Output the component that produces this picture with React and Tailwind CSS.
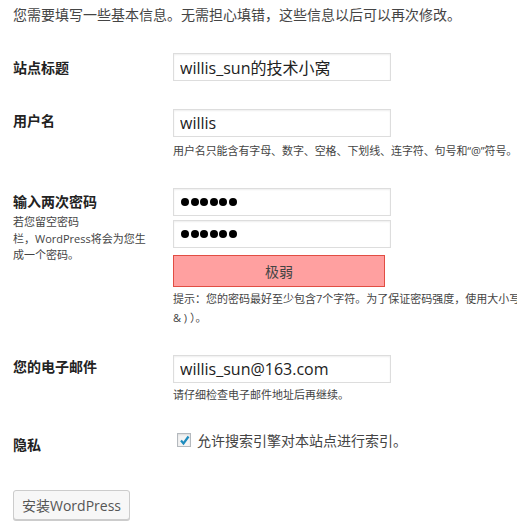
import React from 'react';

const FONT = "font-['Open_Sans','Noto_Sans_CJK_SC',sans-serif]";

function TextBox({ value }) {
  return (
    <input
      type="text"
      readOnly
      value={value}
      className="block w-[218px] h-[28px] border border-[#ddd] bg-white px-[6px] text-[16px] text-[#222] shadow-[inset_0_1px_2px_rgba(0,0,0,0.07)] outline-none"
    />
  );
}

function PasswordBox() {
  // 密码框：六个实心圆点
  return (
    <div className="flex items-center gap-[1.5px] w-[218px] h-[28px] border border-[#ddd] bg-white pl-[7px] shadow-[inset_0_1px_2px_rgba(0,0,0,0.07)]">
      {[0, 1, 2, 3, 4, 5].map((i) => (
        <span key={i} className="block w-[8px] h-[8px] rounded-full bg-black" />
      ))}
    </div>
  );
}

function Label({ children, className = '' }) {
  return <div className={`text-[14px] leading-[18px] font-bold text-[#222] ${className}`}>{children}</div>;
}

export default function App() {
  return (
    <div className={`w-[517px] h-[524px] overflow-hidden bg-white text-[#444] ${FONT}`}>
      <div className="pl-[13px] pt-[6px] w-[700px]">
        <p className="text-[14px] leading-[18px]">您需要填写一些基本信息。无需担心填错，这些信息以后可以再次修改。</p>

        <div className="flex mt-[29px]">
          <div className="w-[160px] shrink-0 pt-[6px]">
            <Label>站点标题</Label>
          </div>
          <TextBox value="willis_sun的技术小窝" />
        </div>

        <div className="flex mt-[28px]">
          <div className="w-[160px] shrink-0 pt-[3px]">
            <Label>用户名</Label>
          </div>
          <div>
            <TextBox value="willis" />
            <p className="mt-[6px] text-[11px] leading-[15px] tracking-[-0.1px] whitespace-nowrap">
              用户名只能含有字母、数字、空格、下划线、连字符、句号和“@”符号。
            </p>
          </div>
        </div>

        <div className="flex mt-[30px]">
          <div className="w-[160px] shrink-0 pt-[5px]">
            <Label>输入两次密码</Label>
            <p className="mt-[3px] text-[11px] leading-[16.5px] whitespace-nowrap">
              若您留空密码
              <br />
              栏，WordPress将会为您生
              <br />
              成一个密码。
            </p>
          </div>
          <div>
            <PasswordBox />
            <div className="mt-[4px]">
              <PasswordBox />
            </div>
            <div className="mt-[7px] w-[212px] h-[32px] flex items-center justify-center border border-[#e14d43] bg-[#ffa0a0] text-[14px] text-[#444]">
              极弱
            </div>
            <p className="mt-[2px] text-[11px] leading-[19px] whitespace-nowrap">
              提示：您的密码最好至少包含7个字符。为了保证密码强度，使用大小写字母、数字和符号（如! " ? $ % ^
              <br />& ) ）。
            </p>
          </div>
        </div>

        <div className="flex mt-[28px]">
          <div className="w-[160px] shrink-0 pt-[3px]">
            <Label>您的电子邮件</Label>
          </div>
          <div>
            <TextBox value="willis_sun@163.com" />
            <p className="mt-[4px] text-[11px] leading-[15px] whitespace-nowrap">请仔细检查电子邮件地址后再继续。</p>
          </div>
        </div>

        <div className="flex mt-[31px]">
          <div className="w-[160px] shrink-0 pt-[3px]">
            <Label>隐私</Label>
          </div>
          <label className="flex items-start h-[18px]">
            <span className="ml-[4px] flex items-center justify-center w-[14px] h-[14px] border border-[#b4b9be] bg-[#f4f4f4] shadow-[inset_0_1px_2px_rgba(0,0,0,0.1)]">
              <svg width="11" height="11" viewBox="0 0 11 11">
                <path d="M2 5.5 L4.5 8.5 L9.5 1.5" fill="none" stroke="#1e8cbe" strokeWidth="2.2" />
              </svg>
            </span>
            <span className="ml-[6px] -mt-[1px] text-[14px] leading-[18px] text-[#444]">允许搜索引擎对本站点进行索引。</span>
          </label>
        </div>

        <button
          type="button"
          className="mt-[36px] block w-[117px] h-[30px] rounded-[3px] border border-[#ccc] bg-[#f7f7f7] text-[14px] text-[#555] shadow-[0_1px_0_#ccc]"
        >
          安装WordPress
        </button>
      </div>
    </div>
  );
}
